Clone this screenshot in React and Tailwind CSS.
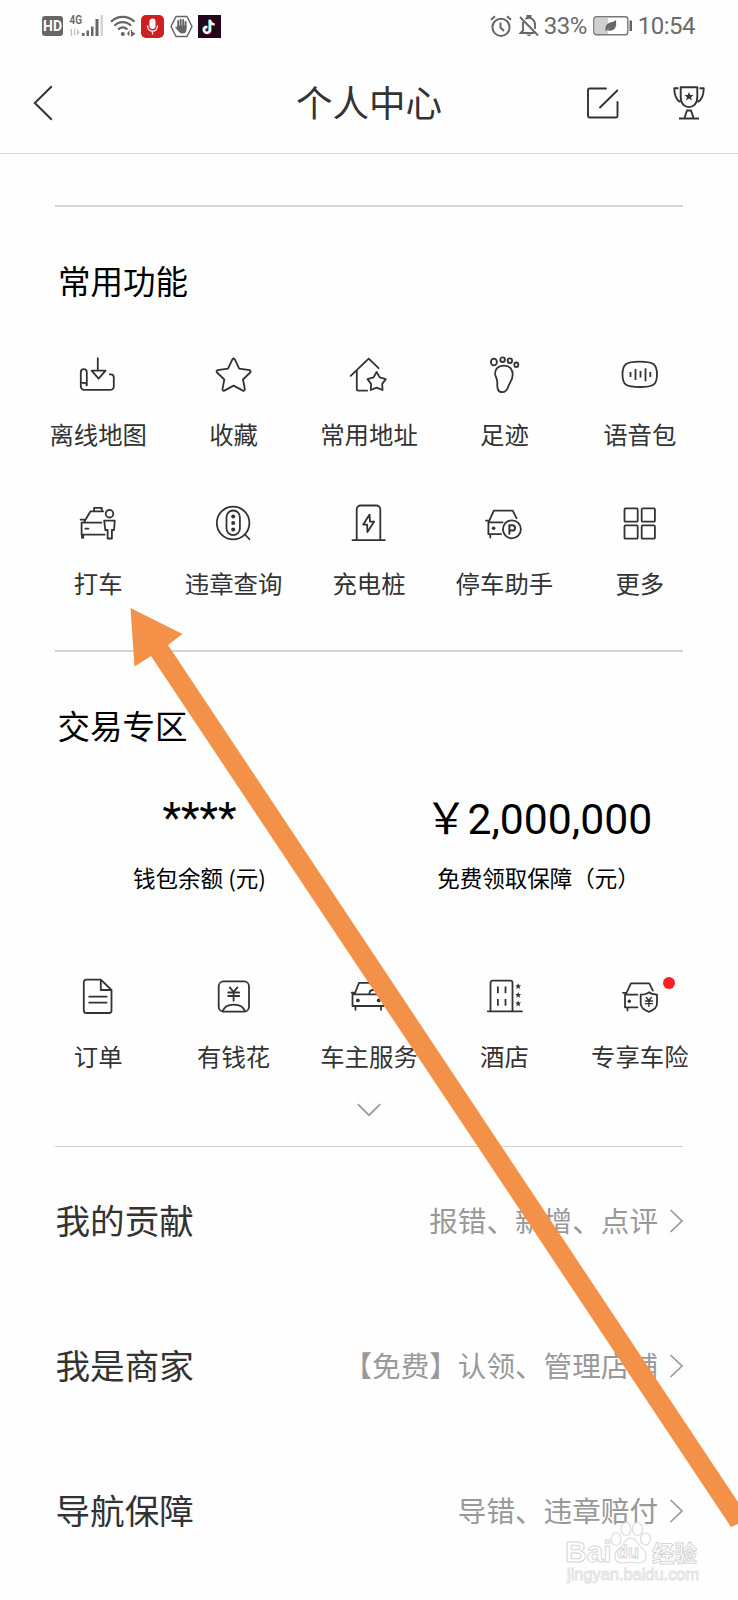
import React from 'react'

// Shared wrapper for the 40px line icons
const Line = ({ children }) => (
    <svg className='w-10 h-10 overflow-visible' viewBox='0 0 40 40' fill='none' stroke='#333' strokeWidth='1.8' strokeLinecap='round' strokeLinejoin='round'>
        {children}
    </svg>
)

const OfflineMap = () => (
    <Line>
        <path d='M19.8 3.2V15.5M13.6 15.7H27.6L20.6 23.6Z' />
        <path d='M2.8 31.5V17.2a3 3 0 0 1 6 0V30M2.8 27.8H6q2.8 0 2.8 2.6' />
        <path d='M2.8 31.5a3.3 3.3 0 0 0 3.3 3.3H32.8a3 3 0 0 0 3-3V22.4a3 3 0 0 0-3-3H31.8' />
    </Line>
)

const Favorite = () => (
    <Line>
        <path d='M18.4 4.4Q19.6 2.6 20.8 4.4L25.2 13.6L35.6 15.2Q37.4 15.9 36.2 17.5L29 24.5L30.8 34.2Q30.8 36.2 28.9 35.6L19.6 30.6L10.4 35.6Q8.5 36.2 8.5 34.2L10.3 24.5L3 17.5Q1.8 15.9 3.6 15.2L14 13.6Z' />
    </Line>
)

const Address = () => (
    <Line>
        <path d='M1.7 20.8L19.7 3.6L29.6 13.2M7.8 16V34Q7.8 35.6 9.4 35.6H18.2' />
        <path d='M27.6 17L30.7 22.4L36.8 24.1L33.2 28.9L33.5 35L27.6 32.6L21.8 35L22.1 28.9L18.5 24.1L24.6 22.4Z' />
    </Line>
)

const Footprint = () => (
    <Line>
        <ellipse cx='9.9' cy='7' rx='3' ry='3.4' />
        <ellipse cx='18.6' cy='4.7' rx='2.3' ry='2.3' />
        <ellipse cx='25.9' cy='5.7' rx='2.2' ry='2.3' />
        <ellipse cx='32.3' cy='9.8' rx='2' ry='2.3' />
        <path d='M20 10.6C14 10.6 10.6 14.5 11.2 19.5C11.6 22.6 13.7 24 13.3 28.5C13 33.6 14 37.2 18.2 37.2C21.5 37.2 23.1 35.6 24.4 31.2C25.4 27.7 28.6 25.5 28.7 19.8C28.8 14.4 25.6 10.6 20 10.6Z' />
    </Line>
)

const Voice = () => (
    <Line>
        <path d='M19.7 6.7C33 6.7 37 8.8 37 19.4S33 32 19.7 32S2.5 30 2.5 19.4S6.4 6.7 19.7 6.7Z' />
        <path strokeLinecap='butt' d='M10.5 17V22M15.5 14V25M20.5 16V22.5M25.5 13.2V26.2M30.3 17V22' />
    </Line>
)

const Taxi = () => (
    <Line>
        <path d='M16.1 7V3.8H23.8V7M25.2 7.3H12.5L6 18.3M2.6 15.6H6.5M4 18.7H23.4M3.6 18.7V30.7H26.6M7.4 24.7H10.4' />
        <path strokeWidth='3' strokeLinecap='butt' d='M4.6 30V34.6' />
        <circle cx='31.5' cy='9.7' r='3.8' />
        <path d='M26.2 16.7H36.8L36 26H33.9V34.5H29.6V26H27.3Z' />
    </Line>
)

const Violation = () => (
    <Line>
        <circle cx='19.1' cy='19' r='16.3' />
        <rect x='12.5' y='6.5' width='13.4' height='24.6' rx='6.7' />
        <path d='M31.4 31L35.4 35.2' />
        <g fill='#333' stroke='none'>
            <circle cx='19.2' cy='12.5' r='2' />
            <circle cx='19.2' cy='19' r='2' />
            <circle cx='19.2' cy='25.5' r='2' />
        </g>
    </Line>
)

const Charger = () => (
    <Line>
        <path d='M7.7 36V5.5a4 4 0 0 1 4-4H27.3a4 4 0 0 1 4 4V36M3.5 36.2H35.8' />
        <path d='M20.6 10.6L14.2 20.6H18.2L18.4 28L25.2 17.6H21Z' />
    </Line>
)

const Parking = () => (
    <Line>
        <path d='M4.9 17.7L9.8 6.7H28.7L32.5 14.2M2 16.6H5.4M4.4 18.3H18.6M4.4 18.3V30.2H17M6.3 30.5V33.4' />
        <circle cx='9.6' cy='24.3' r='1.8' fill='#333' stroke='none' />
        <circle cx='27.9' cy='25.3' r='9' />
        <path strokeWidth='2' d='M25.4 29.8V21.3H28.4a2.6 2.6 0 0 1 0 5.2H25.4' />
    </Line>
)

const More = () => (
    <Line>
        <rect x='4.5' y='4.4' width='13.2' height='13.3' rx='1' />
        <rect x='21.7' y='4.4' width='13.2' height='13.3' rx='1' />
        <rect x='4.5' y='21.4' width='13.2' height='13.3' rx='1' />
        <rect x='21.7' y='21.4' width='13.2' height='13.3' rx='1' />
    </Line>
)

const Order = () => (
    <Line>
        <path d='M22.8 2.7H8.3a2.5 2.5 0 0 0-2.5 2.5V33.5a2.5 2.5 0 0 0 2.5 2.5H31a2.5 2.5 0 0 0 2.5-2.5V13ZM22.8 2.7V13H33.5' />
        <path d='M11.2 19.7H28.6M11.2 25.6H28.6' />
    </Line>
)

const Money = () => (
    <Line>
        <rect x='4.7' y='4.3' width='30.3' height='30.4' rx='5' />
        <path d='M8.7 34.3C11.5 25.3 28 25.3 31 34.3' />
        <path d='M15.8 10.4L19.6 15L23.4 10.4M14.2 15.5H25.2M14.2 19H25.2M19.6 15V23.8' />
    </Line>
)

const Car = () => (
    <Line>
        <path d='M5.6 17L10 5.9H28L32.8 17M2.7 15.7H5.8M3.5 17.3H34.8V29H3.5ZM6.5 29.5V32.8M32 29.5V32.8M20.3 16.6Q20.8 12.8 24.4 13' />
        <circle cx='8.9' cy='23.4' r='1.9' fill='#333' stroke='none' />
        <circle cx='29.7' cy='23.4' r='1.9' fill='#333' stroke='none' />
    </Line>
)

const smallStar = 'M0-3L.9-1H3L1.3 .5L2 2.8L0 1.5L-2 2.8L-1.3 .5L-3-1H-.9Z'

const Hotel = () => (
    <Line>
        <path d='M6.5 34V5.7a2 2 0 0 1 2-2H26.5a2 2 0 0 1 2 2V34M3.8 34.3H38' />
        <path strokeLinecap='butt' d='M13.9 9.5V16.3M21.5 9.5V16.3M13.9 22V28.8M21.5 22V28.8' />
        <g fill='#333' stroke='none'>
            <path transform='translate(34.2 9.2)' d={smallStar} />
            <path transform='translate(34.2 17.9)' d={smallStar} />
            <path transform='translate(34.2 26.6)' d={smallStar} />
        </g>
    </Line>
)

const Insurance = () => (
    <Line>
        <path d='M6 17L10.9 6.3H29.3L32.9 13.6M3 15.8H6.4M5 17.7H17.4M5 17.7V30.4H17.4M7.5 30.8V33.4' />
        <circle cx='9.3' cy='24.3' r='1.7' fill='#333' stroke='none' />
        <path d='M28.9 15.3C31 17 34 17.5 37 17.6V26.5C37 30.5 33 33.3 28.9 34.8C24.8 33.3 20.7 30.5 20.7 26.5V17.6C24 17.5 27 17 28.9 15.3Z' />
        <path strokeWidth='1.4' d='M26.3 20.5L28.9 23.5L31.5 20.5M25.4 24H32.4M25.4 26.6H32.4M28.9 23.5V29.4' />
    </Line>
)

const commonItems = [
    { label: '离线地图', Icon: OfflineMap },
    { label: '收藏', Icon: Favorite },
    { label: '常用地址', Icon: Address },
    { label: '足迹', Icon: Footprint },
    { label: '语音包', Icon: Voice },
    { label: '打车', Icon: Taxi },
    { label: '违章查询', Icon: Violation },
    { label: '充电桩', Icon: Charger },
    { label: '停车助手', Icon: Parking },
    { label: '更多', Icon: More },
]

const tradeItems = [
    { label: '订单', Icon: Order },
    { label: '有钱花', Icon: Money },
    { label: '车主服务', Icon: Car },
    { label: '酒店', Icon: Hotel },
    { label: '专享车险', Icon: Insurance, dot: true },
]

const rows = [
    { title: '我的贡献', hint: '报错、新增、点评' },
    { title: '我是商家', hint: '【免费】认领、管理店铺' },
    { title: '导航保障', hint: '导错、违章赔付' },
]

const IconGrid = ({ items }) => (
    <div className='grid grid-cols-5 gap-y-[55px] px-[30.5px]'>
        {items.map(({ label, Icon, dot }) => (
            <div key={label} className='flex flex-col items-center gap-6'>
                <div className='relative'>
                    <Icon />
                    {dot && <span className='absolute top-0 left-[43px] w-3 h-3 rounded-full bg-[#fb1d22]'></span>}
                </div>
                <span className='text-[24.4px] leading-[30px] text-[#333] whitespace-nowrap'>{label}</span>
            </div>
        ))}
    </div>
)

const StatusBar = () => (
    <div className='h-[52px] flex items-center justify-between pl-[42px] pr-[42px] text-[#6b6b6b]'>
        <div className='flex items-center'>
            <span className='w-[21px] h-5 rounded-[3px] bg-[#666] text-white text-[14px] leading-5 font-bold text-center font-["Roboto",sans-serif]'>HD</span>
            {/* Mobile signal */}
            <svg className='ml-[6px] w-9 h-6 overflow-visible' viewBox='0 0 36 24'>
                <text x='0.5' y='10.2' fontSize='12' fontWeight='600' fill='#666' fontFamily='Roboto, sans-serif' textLength='12.5' lengthAdjust='spacingAndGlyphs'>4G</text>
                <path fill='#c4c4c4' d='M3 14V22H1.6V17L.5 17.2ZM5 14.5H6.3V22L4 19H5ZM8 14V22L10.5 18.5Z' />
                <path fill='#666' d='M13 19H15.5V22H13ZM17.5 16.5H20V22H17.5ZM22 12.5H24.5V22H22ZM26.5 5H29.5V22H26.5Z' />
                <path fill='#d2d2d2' d='M31.5 1H34V22H31.5Z' />
            </svg>
            {/* Wifi */}
            <svg className='ml-[5px] w-[26px] h-[22px]' viewBox='0 0 26 22' fill='none' stroke='#666' strokeWidth='2.2'>
                <path d='M1 6.8C7.5 .2 18 .2 24.5 6.8M4.5 10.8C9 6 16.5 6 21 10.8M8 14.5C11 11.8 14.5 11.8 17.5 14.5' />
                <circle cx='12.8' cy='19' r='2' fill='#666' stroke='none' />
                <path fill='#666' stroke='none' d='M19.5 15V21.5L17 18.5ZM21 15H22V16.5L25.5 18.5L22 21.5H21Z' />
            </svg>
            <svg className='ml-[5px] w-[23px] h-[23px]' viewBox='0 0 23 23'>
                <rect width='23' height='23' rx='5' fill='#ce2023' />
                <rect x='8.5' y='3.5' width='6' height='10.5' rx='3' fill='#fff' />
                <path d='M6.5 10.5C6.5 18 16.5 18 16.5 10.5M11.5 16V19.5' stroke='#fff' strokeWidth='1.3' fill='none' />
            </svg>
            {/* Hand inside a hexagon */}
            <svg className='ml-[6px] w-[23px] h-[23px]' viewBox='0 0 23 23'>
                <path d='M6 1.5H17L22 11.5L17 21.5H6L1 11.5Z' fill='none' stroke='#666' strokeWidth='1.5' strokeLinejoin='round' />
                <path d='M8.2 13V6M10.7 12V4.6M13.2 12V5M15.6 13V7' stroke='#666' strokeWidth='1.9' strokeLinecap='round' />
                <path fill='#666' d='M7.3 10.5H16.5V15Q16 18.5 12.5 18.5Q10 18.5 8.5 16.5L5.3 12.5Q5.2 11.3 6.5 11.8L7.3 12.5Z' />
            </svg>
            <svg className='ml-[5px] w-[23px] h-[23px]' viewBox='0 0 23 23' fill='none' strokeWidth='2.2'>
                <rect width='23' height='23' fill='#25071b' />
                <path stroke='#35d5dc' d='M11.3 4.5V14.5A3 3 0 1 1 8.5 11.5M11.3 4.5C11.5 7 13.5 8.8 16 9' />
                <path stroke='#ef3a5d' d='M12.7 5.3V15.3A3 3 0 1 1 9.9 12.3M12.7 5.3C12.9 7.8 14.5 9.6 17 9.8' />
                <path stroke='#fff' d='M12 4.9V14.9A3 3 0 1 1 9.2 11.9M12 4.9C12.2 7.4 14 9.2 16.5 9.4' />
            </svg>
        </div>
        <div className='flex items-center font-["Roboto",sans-serif] text-[24px] leading-none'>
            <svg className='w-[22px] h-[22px]' viewBox='0 0 22 22' fill='none' stroke='#666' strokeWidth='2'>
                <circle cx='11' cy='12.3' r='8.6' />
                <path d='M10.5 7.5V12.5L14 16M1 4.8L5 1.2M21 4.8L17 1.2' />
            </svg>
            <svg className='ml-[7px] w-5 h-[22px]' viewBox='0 0 20 22' fill='none' stroke='#666' strokeWidth='1.9'>
                <path d='M1 2L19 20.5M4 7V15.5L1.5 18H15M6.5 4Q10 1.5 13.5 4.2Q16 6 16 9.5V14M8.5 2.5V.8H11.5V2.5' />
                <path fill='#666' stroke='none' d='M7.5 19.5H12.5Q10 23 7.5 19.5Z' />
            </svg>
            <span className='ml-[5px] w-[49px] tracking-[-0.5px]'>33%</span>
            <svg className='w-10 h-5' viewBox='0 0 40 20'>
                <rect x='2' y='2' width='13' height='16' fill='#d0d0d0' />
                <rect x='.8' y='.8' width='34' height='18' rx='2.5' fill='none' stroke='#777' strokeWidth='1.4' />
                <path fill='#666' d='M12.5 15.5Q11.5 8.5 17 6.5Q20.5 6 23 4Q24.5 14.5 17 14.8Q15 15 14.5 14L18 10L13.5 14.5Z' />
                <path fill='#666' d='M36.5 4.5H39V15H36.5Z' />
            </svg>
            <span className='ml-[5px] mr-px tracking-[-0.5px]'>10:54</span>
        </div>
    </div>
)

const TitleBar = () => (
    <div className='h-[102px] grid grid-cols-3 items-center pl-[33px] pr-[33px] border-b border-[#d6d6d6]'>
        <svg className='w-5 h-9' viewBox='0 0 20 36' fill='none' stroke='#333' strokeWidth='2'>
            <path d='M18.8 1.2L1.8 18L18.8 34.8' />
        </svg>
        <h1 className='pb-px text-[36.5px] leading-[48px] text-[#333] text-center whitespace-nowrap'>个人中心</h1>
        <div className='flex justify-end items-center gap-[54px]'>
            <svg className='w-8 h-8' viewBox='0 0 32 32' fill='none' stroke='#333' strokeWidth='1.9' strokeLinecap='round'>
                <path d='M19 1.5H2.5Q1 1.5 1 3V29Q1 30.5 2.5 30.5H29Q30.5 30.5 30.5 29V15M13 20.5L30.3 3.5' />
            </svg>
            <svg className='w-8 h-[34px]' viewBox='0 0 32 34' fill='none' stroke='#333' strokeWidth='1.9' strokeLinejoin='round'>
                <path d='M7.7 1.3H24.3V11C24.3 24.5 7.7 24.5 7.7 11ZM5.5 2.3H1.3C1.3 8 2.5 13.5 7.2 16M26.5 2.3H30.7C30.7 8 29.5 13.5 24.8 16M6 32.5H26M11.5 32L14 24.5H18L20.5 32' />
                <path fill='#333' stroke='none' d='M16 6L17.3 9H20.5L18 11.2L19 14.5L16 12.6L13 14.5L14 11.2L11.5 9H14.7Z' />
            </svg>
        </div>
    </div>
)

const Watermark = () => (
    <div className='absolute left-[565px] top-[1519px] w-[136px] h-[66px]'>
        <svg className='absolute left-[44px] top-0 w-[44px] h-[46px]' viewBox='0 0 44 46' fill='#fff' fillOpacity='.85' stroke='#dcdcdc' strokeWidth='1.2'>
            <ellipse cx='7' cy='20' rx='5' ry='6.5' />
            <ellipse cx='17' cy='10' rx='5' ry='6.5' />
            <ellipse cx='28.5' cy='10' rx='5' ry='6.5' />
            <ellipse cx='36.5' cy='20' rx='5' ry='6' />
            <path d='M22 19C28 19 28 26 34 30C39 34 38 44 30 44C26 44 25 43 22 43S17 44 13 44C5 44 4 35 9 31C15 26 16 19 22 19Z' />
        </svg>
        <div className='absolute left-0 top-[17px] w-full flex items-center justify-between font-["Liberation_Sans",sans-serif] font-bold text-white [-webkit-text-stroke:1px_#d6d6d6]'>
            <span className='text-[30px] leading-8 w-[51px]'>Bai</span>
            <span className='text-[18px] leading-8 w-[34px]'>du</span>
            <span className='font-["Noto_Sans_CJK_SC",sans-serif] text-[22.5px] leading-7 w-[49px]'>经验</span>
        </div>
        <div className='absolute left-[2px] top-[45px] font-["Liberation_Sans",sans-serif] text-[16.4px] leading-5 text-white [-webkit-text-stroke:1px_#e2e2e2]'>jingyan.baidu.com</div>
    </div>
)

const App = () => {
    return (
        <div className='relative w-[738px] h-[1600px] overflow-hidden bg-[#fefefe] font-["Noto_Sans_CJK_SC",sans-serif] text-black'>
            <StatusBar />
            <TitleBar />

            {/* Common functions */}
            <section className='mt-[51px]'>
                <div className='mx-[55px] h-[2px] bg-[#d4d4d4]'></div>
                <h2 className='pt-[53px] pl-[58px] text-[32.5px] leading-10'>常用功能</h2>
                <div className='mt-[55px]'>
                    <IconGrid items={commonItems} />
                </div>
            </section>

            {/* Trade zone */}
            <section className='mt-[52px]'>
                <div className='mx-[55px] h-[2px] bg-[#d4d4d4]'></div>
                <h2 className='pt-[53px] pl-[57.5px] text-[32.5px] leading-10'>交易专区</h2>
                <div className='mt-[48px] grid grid-cols-2 px-[30px] text-center'>
                    <div>
                        <div className='font-["Roboto","Noto_Sans_CJK_SC",sans-serif] text-[43px] leading-[48px]'>****</div>
                        <div className='mt-[21px] text-[22.5px] leading-[30px]'>钱包余额 (元)</div>
                    </div>
                    <div>
                        <div className='font-["Roboto","Noto_Sans_CJK_SC",sans-serif] text-[42.7px] leading-[52px]'>￥2,000,000</div>
                        <div className='mt-[17px] text-[22.5px] leading-[30px]'>免费领取保障（元）</div>
                    </div>
                </div>
                <div className='mt-[85px]'>
                    <IconGrid items={tradeItems} />
                </div>
                <svg className='mt-[32px] mx-auto w-6 h-[14px]' viewBox='0 0 24 14' fill='none' stroke='#999' strokeWidth='1.7'>
                    <path d='M.8 1.2L12 12.2L23.2 1.2' />
                </svg>
            </section>

            {/* List entries */}
            <section className='mt-[29px]'>
                <div className='mx-[55px] h-px bg-[#ccc]'></div>
                <div className='pt-px'>
                    {rows.map((row) => (
                        <div key={row.title} className='h-[145px] flex items-center pl-[55.5px] pr-[54px]'>
                            <span className='pb-1 text-[34.6px] leading-[46px] text-[#333]'>{row.title}</span>
                            <span className='ml-auto pb-[2px] text-[28.6px] leading-[40px] text-[#999] whitespace-nowrap'>{row.hint}</span>
                            <svg className='ml-[11px] w-[15px] h-6' viewBox='0 0 15 24' fill='none' stroke='#999' strokeWidth='1.7'>
                                <path d='M1.5 1L13 12L1.5 23' />
                            </svg>
                        </div>
                    ))}
                </div>
            </section>

            <Watermark />

            {/* Pointer arrow laid over the page */}
            <svg className='absolute inset-0 w-[738px] h-[1600px] pointer-events-none' viewBox='0 0 738 1600'>
                <path fill='#f39148' d='M130.5 608L182.5 634L168 645L738 1502V1524L731 1527L151 656L134.5 666.5Z' />
            </svg>
        </div>
    )
}

export default App
